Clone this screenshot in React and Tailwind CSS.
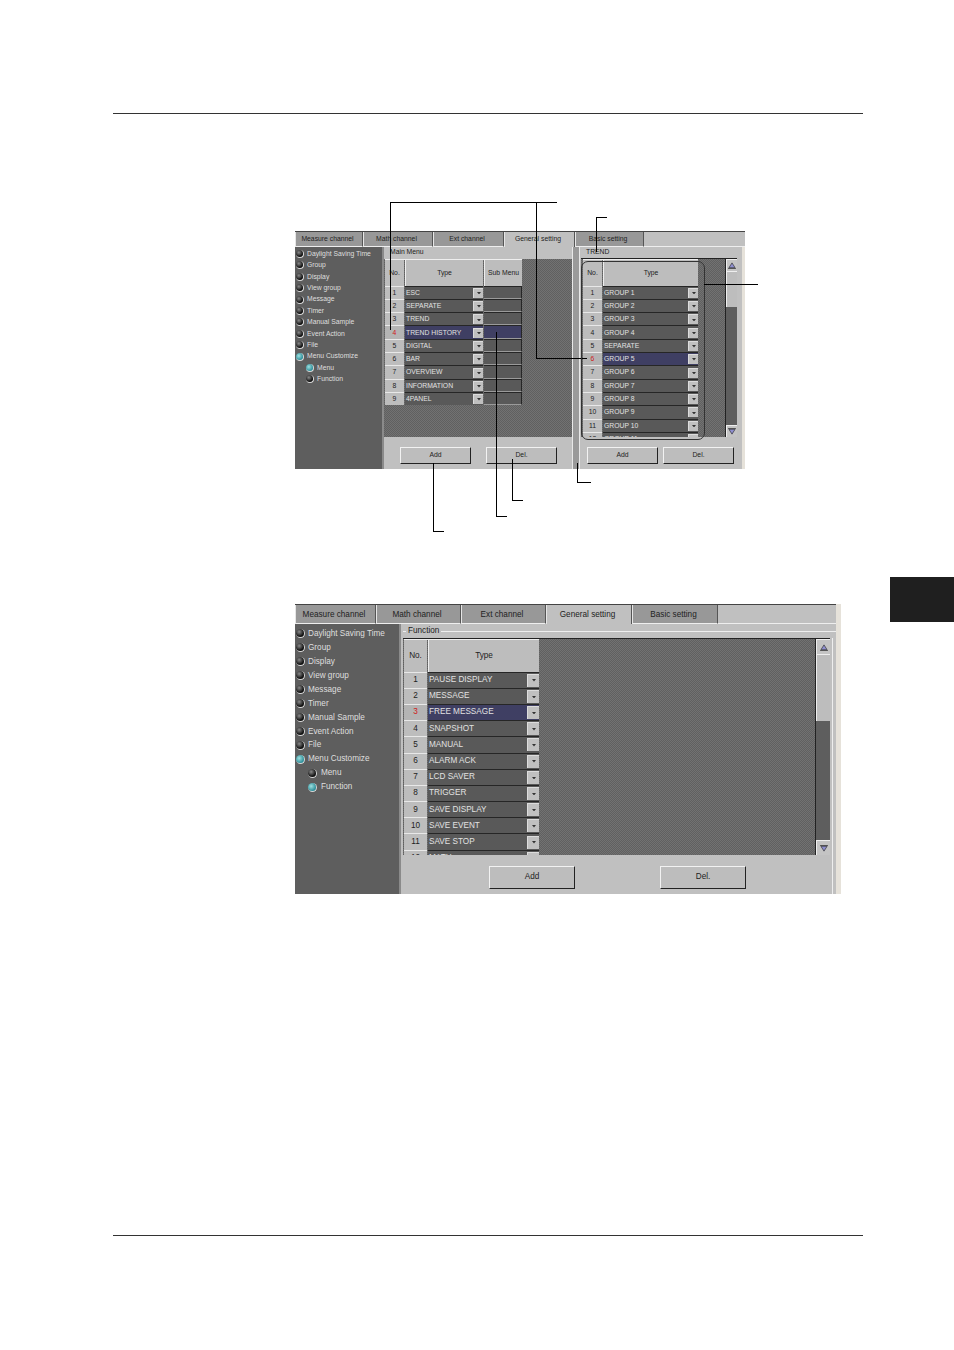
const sideItems = [
  ['Daylight Saving Time', false, false],
  ['Group', false, false],
  ['Display', false, false],
  ['View group', false, false],
  ['Message', false, false],
  ['Timer', false, false],
  ['Manual Sample', false, false],
  ['Event Action', false, false],
  ['File', false, false],
  ['Menu Customize', true, false],
]

const hatch = 'bg-[repeating-conic-gradient(#606060_0_25%,#727272_0_50%)] bg-[length:2px_2px]'

const small = {
  text: 'text-[6.8px]',
  tabs: 'h-[16px]',
  tabText: 'pt-0',
  sideW: 'w-[89px]',
  sidePad: 'pt-[1.2px]',
  item: 'h-[11.42px] gap-[3px] pl-[1px]',
  sub: 'h-[11.42px] gap-[3px] pl-[11px]',
  bullet: 'w-[8px] h-[8px]',
  head: 'h-[26.6px]',
  row: 'h-[13.3px]',
  drop: 'w-[10px] h-[10px]',
  noW: 'w-[19px]',
  btn: 'h-[17px]',
  scrollW: 'w-[12px]',
  arrowBtn: 'h-[12px]',
}

const large = {
  text: 'text-[8.2px]',
  tabs: 'h-[20px]',
  tabText: 'pt-[2px]',
  sideW: 'w-[106px]',
  sidePad: 'pt-[3px]',
  item: 'h-[13.96px] gap-[3px] pl-[1px]',
  sub: 'h-[13.96px] gap-[4px] pl-[13px]',
  bullet: 'w-[9px] h-[9px]',
  head: 'h-[32.6px]',
  row: 'h-[16.2px]',
  drop: 'w-[12px] h-[13px]',
  noW: 'w-[23px]',
  btn: 'h-[23px]',
  scrollW: 'w-[15px]',
  arrowBtn: 'h-[15px]',
}

function Bullet({ on, s }) {
  return (
    <span
      className={`${s.bullet} shrink-0 rounded-full border-r border-b border-[#d8d8d8] ${
        on
          ? 'bg-[radial-gradient(circle_at_40%_40%,#9fe0e0,#2f8f9a_70%)]'
          : 'bg-[radial-gradient(circle_at_40%_35%,#8a8a8a,#111_65%)]'
      }`}
    />
  )
}

function Tab({ label, width, active, s }) {
  return (
    <div
      className={`${width} ${s.tabText} flex items-center justify-center pr-[3px] border-l border-r border-l-[#e6e6e6] border-r-[#555] text-[#222] ${
        active ? 'bg-[#c0c0c0]' : 'bg-[#989898] border-b border-b-[#eeeeee]'
      }`}
    >
      {label}
    </div>
  )
}

function Tabs({ s, widths }) {
  const labels = ['Measure channel', 'Math channel', 'Ext channel', 'General setting', 'Basic setting']
  return (
    <div className={`${s.tabs} flex shrink-0 border-t border-[#444] bg-[#c0c0c0]`}>
      {labels.map((label, i) => (
        <Tab key={label} label={label} width={widths[i]} active={i === 3} s={s} />
      ))}
      <div className="flex-1 border-b border-[#eeeeee]" />
    </div>
  )
}

function Sidebar({ s, activeSub }) {
  return (
    <div className={`${s.sideW} ${s.sidePad} shrink-0 bg-[#5e5e5e] border-r-2 border-[#8a8a8a] text-[#dedede]`}>
      {sideItems.map(([label, on]) => (
        <div key={label} className={`${s.item} flex items-center`}>
          <Bullet on={on} s={s} />
          <span className="whitespace-nowrap">{label}</span>
        </div>
      ))}
      <div className={`${s.sub} flex items-center`}>
        <Bullet on={activeSub === 'Menu'} s={s} />
        <span>Menu</span>
      </div>
      <div className={`${s.sub} flex items-center`}>
        <Bullet on={activeSub === 'Function'} s={s} />
        <span>Function</span>
      </div>
    </div>
  )
}

function DropArrow({ s }) {
  return (
    <span className={`${s.drop} shrink-0 flex items-center justify-center bg-[#c0c0c0] border-l border-t border-[#dcdcdc]`}>
      <svg width="4" height="2.5" viewBox="0 0 5 3">
        <path d="M0 0h5L2.5 3z" fill="#333" />
      </svg>
    </span>
  )
}

function Row({ no, label, selected, s, sub, subOn }) {
  return (
    <div className={`${s.row} flex shrink-0`}>
      <div
        className={`${s.noW} shrink-0 flex items-center justify-center border-t border-[#e8e8e8] mr-[1px] ${
          selected ? 'bg-[#b4b4b4] text-[#d01818]' : 'bg-[#bdbdbd] text-[#222]'
        }`}
      >
        {no}
      </div>
      <div
        className={`flex-1 min-w-0 flex items-center justify-between border-t border-[#262626] pl-[1px] text-[#e2e2e2] ${
          selected ? 'bg-[#3f3f63]' : 'bg-[#595959]'
        }`}
      >
        <span className="whitespace-nowrap">{label}</span>
        <DropArrow s={s} />
      </div>
      {sub && (
        <div
          className={`w-[38px] ml-[1px] shrink-0 border-t border-b border-r border-t-[#262626] border-b-[#9a9a9a] border-r-[#262626] ${
            subOn ? 'bg-[#3f3f63]' : 'bg-[#595959]'
          }`}
        />
      )}
    </div>
  )
}

function Head({ s, typeW, sub }) {
  return (
    <div className={`${s.head} flex shrink-0 text-[#222] border-t border-[#eeeeee]`}>
      <div className={`${s.noW} shrink-0 mr-[1px] flex items-center justify-center bg-[#bdbdbd]`}>No.</div>
      <div className={`${typeW} shrink-0 flex items-center justify-center bg-[#bdbdbd] border-l border-[#eeeeee]`}>Type</div>
      {sub && (
        <div className="w-[38px] ml-[1px] shrink-0 flex items-center justify-center bg-[#bdbdbd] border-l border-[#eeeeee]">
          Sub Menu
        </div>
      )}
    </div>
  )
}

function ArrowBtn({ s, up }) {
  return (
    <div className={`${s.arrowBtn} shrink-0 flex items-center justify-center bg-[#c4c4c4] border-t border-l border-[#eeeeee]`}>
      <svg width="8" height="7" viewBox="0 0 9 8">
        {up ? (
          <>
            <path d="M4.5 1 8 6.5H1z" fill="#8f8fd0" stroke="#222" strokeWidth="0.7" />
            <path d="M0 7.5h9" stroke="#222" strokeWidth="0.8" />
          </>
        ) : (
          <>
            <path d="M0 .5h9" stroke="#222" strokeWidth="0.8" />
            <path d="M4.5 7 8 1.5H1z" fill="#8f8fd0" stroke="#222" strokeWidth="0.7" />
          </>
        )}
      </svg>
    </div>
  )
}

function ScrollBar({ s, thumb }) {
  return (
    <div className={`${s.scrollW} shrink-0 h-full flex flex-col bg-[#5e5e5e] border-l border-[#222]`}>
      <ArrowBtn s={s} up />
      <div className={`${thumb} shrink-0 bg-[#bdbdbd] border-t border-l border-[#eeeeee]`} />
      <div className="flex-1" />
      <ArrowBtn s={s} />
    </div>
  )
}

function Btn({ label, width, s }) {
  return (
    <div
      className={`${width} ${s.btn} flex items-center justify-center bg-[#bdbdbd] border border-t-[#f2f2f2] border-l-[#f2f2f2] border-r-[#222] border-b-[#222] text-[#222]`}
    >
      {label}
    </div>
  )
}

const mainRows = ['ESC', 'SEPARATE', 'TREND', 'TREND HISTORY', 'DIGITAL', 'BAR', 'OVERVIEW', 'INFORMATION', '4PANEL']
const trendRows = ['GROUP 1', 'GROUP 2', 'GROUP 3', 'GROUP 4', 'SEPARATE', 'GROUP 5', 'GROUP 6', 'GROUP 7', 'GROUP 8', 'GROUP 9', 'GROUP 10', 'GROUP 11']
const funcRows = ['PAUSE DISPLAY', 'MESSAGE', 'FREE MESSAGE', 'SNAPSHOT', 'MANUAL', 'ALARM ACK', 'LCD SAVER', 'TRIGGER', 'SAVE DISPLAY', 'SAVE EVENT', 'SAVE STOP', 'MATH']

function MenuScreen() {
  const s = small
  return (
    <div className={`w-[450px] h-[238px] flex flex-col bg-[#c0c0c0] overflow-hidden ${s.text}`}>
      <Tabs s={s} widths={['w-[68px]', 'w-[70px]', 'w-[71px]', 'w-[71px]', 'w-[69px]']} />
      <div className="flex flex-1 min-h-0">
        <Sidebar s={s} activeSub="Menu" />
        {/* main menu table */}
        <div className="w-[188px] shrink-0 flex flex-col">
          <div className="h-[12px] pl-[6px] shrink-0 text-[#222]">Main Menu</div>
          <div className={`h-[178px] shrink-0 flex flex-col pl-[1px] ${hatch}`}>
            <div className="w-[137px]">
              <Head s={s} typeW="w-[78px]" sub />
              {mainRows.map((label, i) => (
                <Row key={label} no={i + 1} label={label} selected={i === 3} subOn={i === 3} s={s} sub />
              ))}
            </div>
          </div>
          <div className="flex flex-1 gap-[15px] pl-[16px] pt-[10px]">
            <Btn label="Add" width="w-[71px]" s={s} />
            <Btn label="Del." width="w-[71px]" s={s} />
          </div>
        </div>
        {/* divider */}
        <div className="w-[8px] shrink-0 border-l border-r border-[#e8e8e8] bg-[#9a9a9a]" />
        {/* trend table */}
        <div className="flex-1 min-w-0 flex flex-col border-r-[3px] border-[#e6e2da]">
          <div className="h-[11px] pl-[6px] shrink-0 text-[#222]">TREND</div>
          <div className={`h-[179px] shrink-0 flex ml-[1px] mr-[5px] pl-[2px] border-t border-[#222] ${hatch}`}>
            <div className="w-[115px] h-full overflow-hidden">
              <Head s={s} typeW="w-[95px]" />
              {trendRows.map((label, i) => (
                <Row key={label} no={i + 1} label={label} selected={i === 5} s={s} />
              ))}
            </div>
            <div className="flex-1" />
            <ScrollBar s={s} thumb="h-[36px]" />
          </div>
          <div className="flex flex-1 gap-[5px] pl-[7px] pt-[10px]">
            <Btn label="Add" width="w-[71px]" s={s} />
            <Btn label="Del." width="w-[71px]" s={s} />
          </div>
        </div>
      </div>
    </div>
  )
}

function FunctionScreen() {
  const s = large
  return (
    <div className={`w-[546px] h-[290px] flex flex-col bg-[#c0c0c0] overflow-hidden ${s.text}`}>
      <div className="flex flex-1 min-h-0 flex-col border-r-[5px] border-[#e6e2da]">
        <Tabs s={s} widths={['w-[81px]', 'w-[85px]', 'w-[85px]', 'w-[86px]', 'w-[86px]']} />
        <div className="flex flex-1 min-h-0">
          <Sidebar s={s} activeSub="Function" />
          <div className="flex-1 min-w-0 flex flex-col">
            <div className="h-[14px] shrink-0 flex items-center gap-[2px] pl-[2px] text-[#222]">
              <span className="w-[3px] h-px bg-[#eeeeee]" />
              <span>Function</span>
              <span className="flex-1 h-px bg-[#eeeeee]" />
            </div>
            <div className="flex flex-1 min-h-0 flex-col border-r border-[#eeeeee] mr-[3px]">
              <div className={`h-[217px] shrink-0 flex ml-[2px] mr-[2px] pl-[1px] border-t border-[#222] ${hatch}`}>
                <div className="w-[135px] h-full overflow-hidden">
                  <Head s={s} typeW="w-[111px]" />
                  {funcRows.map((label, i) => (
                    <Row key={label} no={i + 1} label={label} selected={i === 2} s={s} />
                  ))}
                </div>
                <div className="flex-1" />
                <ScrollBar s={s} thumb="h-[67px]" />
              </div>
              <div className="flex flex-1 gap-[85px] pl-[88px] pt-[11px]">
                <Btn label="Add" width="w-[86px]" s={s} />
                <Btn label="Del." width="w-[86px]" s={s} />
              </div>
            </div>
          </div>
        </div>
      </div>
    </div>
  )
}

// leader lines drawn over the screenshots
function Leaders() {
  return (
    <>
      <div className="absolute left-[390px] top-[202px] w-[167px] h-px bg-black" />
      <div className="absolute left-[390px] top-[202px] w-px h-[128px] bg-black" />
      <div className="absolute left-[536px] top-[202px] w-px h-[156px] bg-black" />
      <div className="absolute left-[536px] top-[358px] w-[51px] h-px bg-black" />
      <div className="absolute left-[596px] top-[217px] w-[11px] h-px bg-black" />
      <div className="absolute left-[596px] top-[217px] w-px h-[35px] bg-black" />
      <div className="absolute left-[581px] top-[261px] w-[124px] h-[179px] rounded-[7px] border border-[#333]" />
      <div className="absolute left-[704px] top-[284px] w-[54px] h-px bg-black" />
      <div className="absolute left-[496px] top-[332px] w-px h-[184px] bg-black" />
      <div className="absolute left-[496px] top-[516px] w-[11px] h-px bg-black" />
      <div className="absolute left-[512px] top-[459px] w-px h-[41px] bg-black" />
      <div className="absolute left-[512px] top-[500px] w-[11px] h-px bg-black" />
      <div className="absolute left-[433px] top-[463px] w-px h-[68px] bg-black" />
      <div className="absolute left-[433px] top-[531px] w-[11px] h-px bg-black" />
      <div className="absolute left-[577px] top-[463px] w-px h-[19px] bg-black" />
      <div className="absolute left-[577px] top-[482px] w-[14px] h-px bg-black" />
    </>
  )
}

export default function App() {
  return (
    <div className="relative w-[954px] h-[1350px] bg-white overflow-hidden font-['Liberation_Sans',Arial,sans-serif]">
      <div className="ml-[113px] mt-[113px] w-[750px] h-px bg-[#333]" />
      <div className="ml-[295px] mt-[117px]">
        <MenuScreen />
      </div>
      <div className="ml-[295px] mt-[135px]">
        <FunctionScreen />
      </div>
      <div className="ml-[113px] mt-[341px] w-[750px] h-px bg-[#333]" />
      <Leaders />
      <div className="absolute right-0 top-[577px] w-[64px] h-[45px] bg-[#1f1f1f]" />
    </div>
  )
}
